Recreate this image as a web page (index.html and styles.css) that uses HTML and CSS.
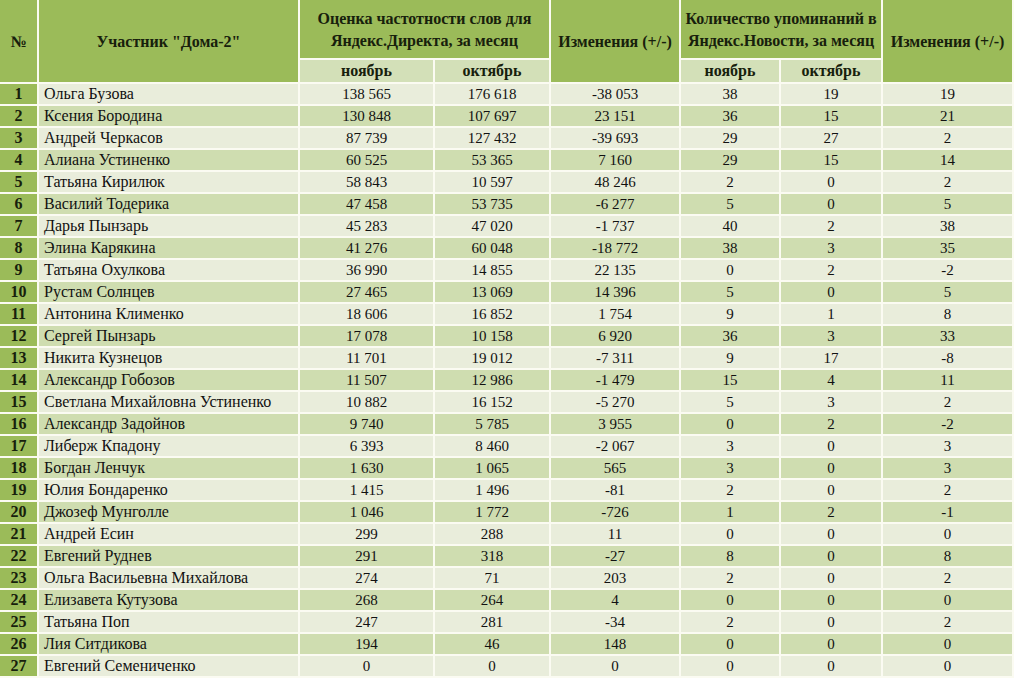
FILE: index.html
```html
<!DOCTYPE html>
<html lang="ru">
<head>
<meta charset="utf-8">
<title>Участники Дома-2</title>
<link rel="stylesheet" href="styles.css">
</head>
<body>
<table class="stats">
  <colgroup>
    <col class="c-num">
    <col class="c-name">
    <col class="c-ynov">
    <col class="c-yoct">
    <col class="c-ychg">
    <col class="c-nnov">
    <col class="c-noct">
    <col class="c-nchg">
  </colgroup>
  <thead>
    <tr class="h1">
      <th rowspan="2">№</th>
      <th rowspan="2">Участник "Дома-2"</th>
      <th colspan="2">Оценка частотности слов для<br>Яндекс.Директа, за месяц</th>
      <th rowspan="2">Изменения (+/-)</th>
      <th colspan="2">Количество упоминаний в<br>Яндекс.Новости, за месяц</th>
      <th rowspan="2">Изменения (+/-)</th>
    </tr>
    <tr class="h2">
      <th>ноябрь</th>
      <th>октябрь</th>
      <th>ноябрь</th>
      <th>октябрь</th>
    </tr>
  </thead>
  <tbody>
    <tr><th>1</th><td class="name">Ольга Бузова</td><td>138 565</td><td>176 618</td><td>-38 053</td><td>38</td><td>19</td><td>19</td></tr>
    <tr><th>2</th><td class="name">Ксения Бородина</td><td>130 848</td><td>107 697</td><td>23 151</td><td>36</td><td>15</td><td>21</td></tr>
    <tr><th>3</th><td class="name">Андрей Черкасов</td><td>87 739</td><td>127 432</td><td>-39 693</td><td>29</td><td>27</td><td>2</td></tr>
    <tr><th>4</th><td class="name">Алиана Устиненко</td><td>60 525</td><td>53 365</td><td>7 160</td><td>29</td><td>15</td><td>14</td></tr>
    <tr><th>5</th><td class="name">Татьяна Кирилюк</td><td>58 843</td><td>10 597</td><td>48 246</td><td>2</td><td>0</td><td>2</td></tr>
    <tr><th>6</th><td class="name">Василий Тодерика</td><td>47 458</td><td>53 735</td><td>-6 277</td><td>5</td><td>0</td><td>5</td></tr>
    <tr><th>7</th><td class="name">Дарья Пынзарь</td><td>45 283</td><td>47 020</td><td>-1 737</td><td>40</td><td>2</td><td>38</td></tr>
    <tr><th>8</th><td class="name">Элина Карякина</td><td>41 276</td><td>60 048</td><td>-18 772</td><td>38</td><td>3</td><td>35</td></tr>
    <tr><th>9</th><td class="name">Татьяна Охулкова</td><td>36 990</td><td>14 855</td><td>22 135</td><td>0</td><td>2</td><td>-2</td></tr>
    <tr><th>10</th><td class="name">Рустам Солнцев</td><td>27 465</td><td>13 069</td><td>14 396</td><td>5</td><td>0</td><td>5</td></tr>
    <tr><th>11</th><td class="name">Антонина Клименко</td><td>18 606</td><td>16 852</td><td>1 754</td><td>9</td><td>1</td><td>8</td></tr>
    <tr><th>12</th><td class="name">Сергей Пынзарь</td><td>17 078</td><td>10 158</td><td>6 920</td><td>36</td><td>3</td><td>33</td></tr>
    <tr><th>13</th><td class="name">Никита Кузнецов</td><td>11 701</td><td>19 012</td><td>-7 311</td><td>9</td><td>17</td><td>-8</td></tr>
    <tr><th>14</th><td class="name">Александр Гобозов</td><td>11 507</td><td>12 986</td><td>-1 479</td><td>15</td><td>4</td><td>11</td></tr>
    <tr><th>15</th><td class="name">Светлана Михайловна Устиненко</td><td>10 882</td><td>16 152</td><td>-5 270</td><td>5</td><td>3</td><td>2</td></tr>
    <tr><th>16</th><td class="name">Александр Задойнов</td><td>9 740</td><td>5 785</td><td>3 955</td><td>0</td><td>2</td><td>-2</td></tr>
    <tr><th>17</th><td class="name">Либерж Кпадону</td><td>6 393</td><td>8 460</td><td>-2 067</td><td>3</td><td>0</td><td>3</td></tr>
    <tr><th>18</th><td class="name">Богдан Ленчук</td><td>1 630</td><td>1 065</td><td>565</td><td>3</td><td>0</td><td>3</td></tr>
    <tr><th>19</th><td class="name">Юлия Бондаренко</td><td>1 415</td><td>1 496</td><td>-81</td><td>2</td><td>0</td><td>2</td></tr>
    <tr><th>20</th><td class="name">Джозеф Мунголле</td><td>1 046</td><td>1 772</td><td>-726</td><td>1</td><td>2</td><td>-1</td></tr>
    <tr><th>21</th><td class="name">Андрей Есин</td><td>299</td><td>288</td><td>11</td><td>0</td><td>0</td><td>0</td></tr>
    <tr><th>22</th><td class="name">Евгений Руднев</td><td>291</td><td>318</td><td>-27</td><td>8</td><td>0</td><td>8</td></tr>
    <tr><th>23</th><td class="name">Ольга Васильевна Михайлова</td><td>274</td><td>71</td><td>203</td><td>2</td><td>0</td><td>2</td></tr>
    <tr><th>24</th><td class="name">Елизавета Кутузова</td><td>268</td><td>264</td><td>4</td><td>0</td><td>0</td><td>0</td></tr>
    <tr><th>25</th><td class="name">Татьяна Поп</td><td>247</td><td>281</td><td>-34</td><td>2</td><td>0</td><td>2</td></tr>
    <tr><th>26</th><td class="name">Лия Ситдикова</td><td>194</td><td>46</td><td>148</td><td>0</td><td>0</td><td>0</td></tr>
    <tr><th>27</th><td class="name">Евгений Семениченко</td><td>0</td><td>0</td><td>0</td><td>0</td><td>0</td><td>0</td></tr>
  </tbody>
</table>
</body>
</html>
```

FILE: styles.css
```css
html, body {
  margin: 0;
  padding: 0;
  background: #fbfbf2;
}

.stats {
  width: 1014px;
  table-layout: fixed;
  border-collapse: separate;
  border-spacing: 0;
  font-family: "Liberation Serif", "Times New Roman", serif;
  font-size: 15px;
  color: #111;
}

.c-num { width: 39px; }
.c-name { width: 261px; }
.c-ynov { width: 135px; }
.c-yoct { width: 116px; }
.c-ychg { width: 130px; }
.c-nnov { width: 100px; }
.c-noct { width: 102px; }
.c-nchg { width: 131px; }

.stats th,
.stats td {
  box-sizing: border-box;
  padding: 0;
  border-right: 2px solid #fbfbf2;
  border-bottom: 2px solid #fbfbf2;
  text-align: center;
  vertical-align: middle;
  line-height: 20px;
  height: 22px;
  white-space: nowrap;
  overflow: hidden;
}

.stats thead th {
  font-size: 16px;
  font-weight: bold;
  color: #17200c;
  background: #9bbb59;
  line-height: 22px;
}

.stats .h1 th {
  height: 60px;
  padding-top: 2px;
}

.stats .h2 th {
  height: 24px;
  padding-top: 0;
  background: #d3e0b8;
  line-height: 20px;
}

.stats tbody th {
  font-size: 16px;
  font-weight: bold;
  background: #9bbb59;
  color: #17200c;
}

.stats tbody tr:nth-child(odd) td {
  background: #e9eddb;
}

.stats tbody tr:nth-child(even) td {
  background: #cfddb0;
}

.stats td.name {
  font-size: 16px;
  text-align: left;
  padding-left: 5px;
}
```
